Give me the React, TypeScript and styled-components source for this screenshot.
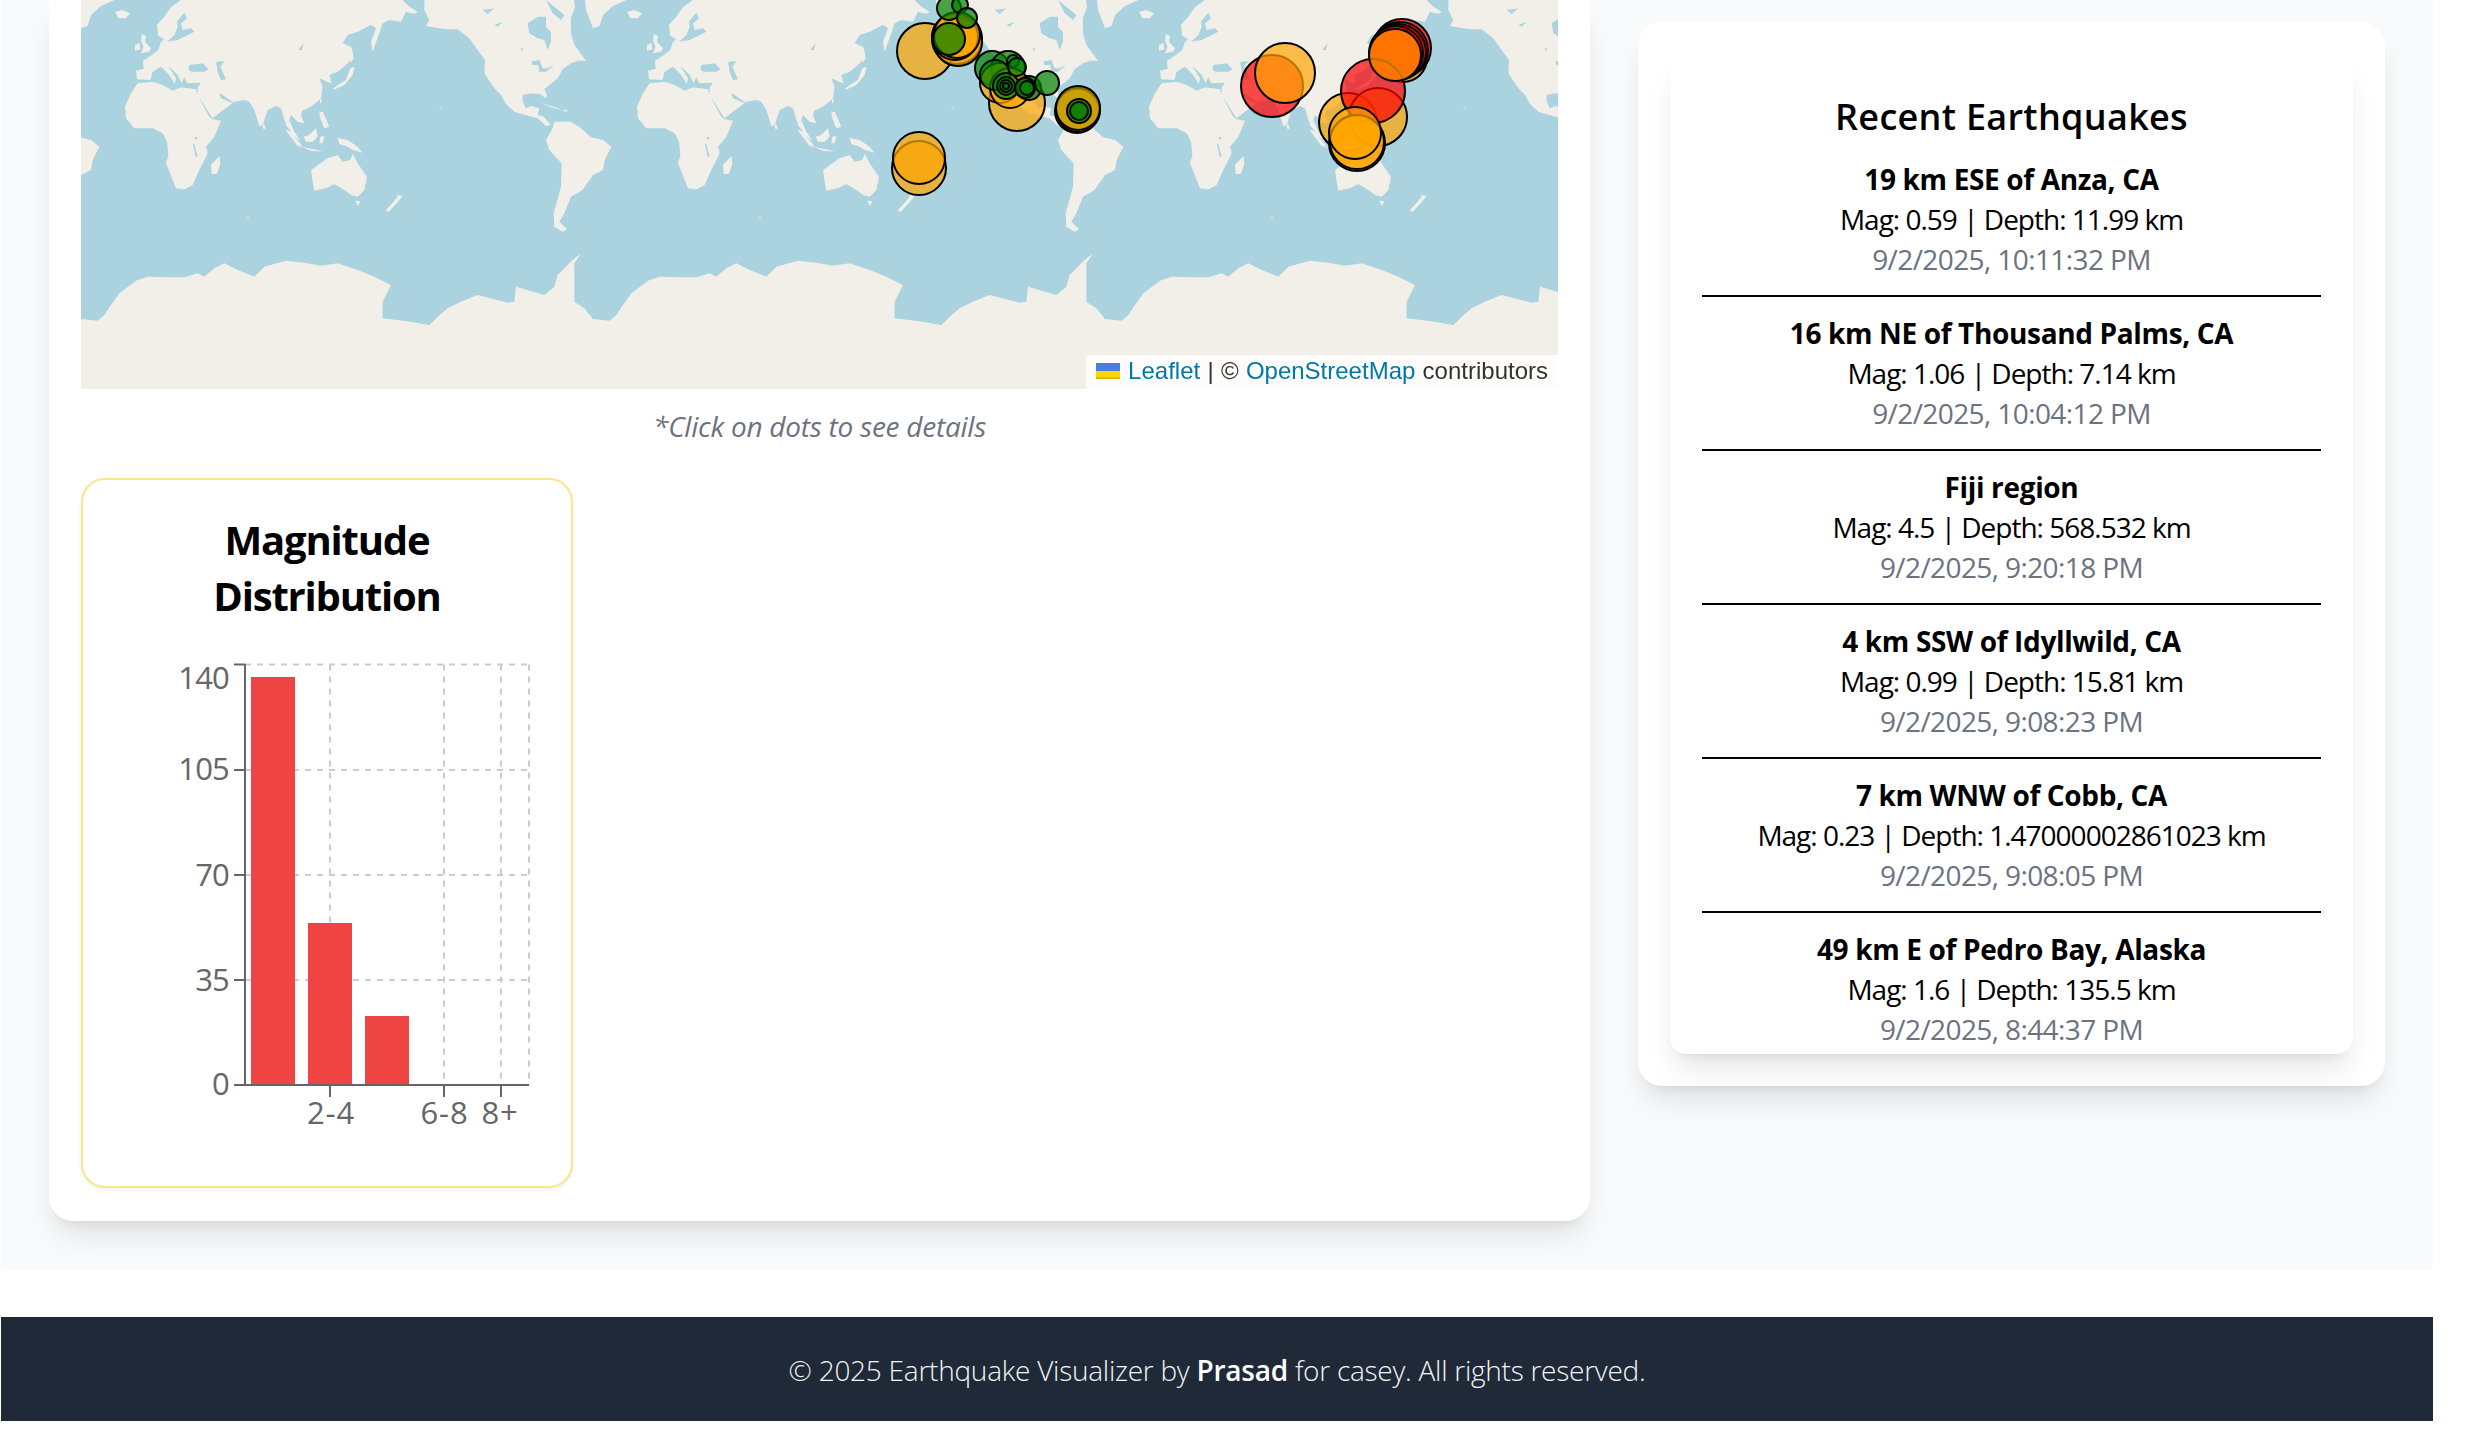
import React from "react";
import styled, { createGlobalStyle } from "styled-components";

const GlobalStyle = createGlobalStyle`
  html, body { margin: 0; padding: 0; background: #fff; }
  body { font-family: "Open Sans", "Noto Sans", sans-serif; color: #000; overflow: hidden; }
  * { box-sizing: border-box; }
`;

const Page = styled.div`
  width: 2432px;
  margin-left: 1px;
`;
const Main = styled.main`
  height: 1269px;
  background: #f9fafb;
  padding: 0 48px;
  overflow: hidden;
  display: grid;
  grid-template-columns: 1541px 747px;
  column-gap: 48px;
  align-items: start;
`;
const shadow = `box-shadow: 0 20px 30px -6px rgba(0,0,0,.1), 0 8px 12px -8px rgba(0,0,0,.1);`;
const MapCard = styled.section`
  background: #fff;
  border-radius: 0 0 24px 24px;
  padding: 0 32px 33px;
  ${shadow}
`;
const MapFrame = styled.div`
  position: relative;
  height: 389px;
  background: #aad3df;
  overflow: hidden;
`;
const MapSvg = styled.svg`
  display: block;
`;
const Attribution = styled.div`
  position: absolute;
  right: 0;
  bottom: 0;
  height: 34px;
  padding: 0 10px 2px 10px;
  display: flex;
  align-items: center;
  white-space: pre;
  background: rgba(255,255,255,.8);
  font: 24px/32px "Liberation Sans", Arial, sans-serif;
  word-spacing: 0.6px;
  color: #333;
`;
const AttrLink = styled.span`
  color: #0078a8;
`;
const FlagIcon = styled.svg`
  width: 24px;
  height: 16px;
  margin-right: 8px;
`;
const Caption = styled.p`
  margin: 17px 0 32px;
  font-size: 28px;
  line-height: 40px;
  font-style: italic;
  letter-spacing: -0.25px;
  text-align: center;
  color: #6b7280;
`;
const ChartCard = styled.div`
  width: 492px;
  height: 710px;
  border: 2px solid #fde68a;
  border-radius: 24px;
  padding: 32px;
  background: #fff;
  box-shadow: 0 2px 4px rgba(0,0,0,.06);
`;
const ChartTitle = styled.h2`
  margin: 0 0 16px;
  font-size: 40px;
  line-height: 56px;
  font-weight: 700;
  letter-spacing: -1.2px;
  text-align: center;
`;
const ChartSvg = styled.svg`
  display: block;
  width: 424px;
  height: 514px;
`;
const Side = styled.aside`
  margin-top: 22px;
  padding: 32px;
  height: 1064px;
  background: #fff;
  border-radius: 24px;
  ${shadow}
`;
const ListCard = styled.div`
  height: 1000px;
  padding: 32px;
  overflow: hidden;
  background: #fff;
  border-radius: 16px;
  ${shadow}
`;
const ListTitle = styled.h2`
  margin: 3px 0 14px;
  font-size: 36px;
  line-height: 56px;
  font-weight: 600;
  letter-spacing: 0.3px;
  text-align: center;
`;
const Item = styled.div`
  padding-bottom: 16px;
  margin-bottom: 16px;
  border-bottom: 2px solid #000;
  text-align: center;
  font-size: 28px;
  line-height: 40px;
  letter-spacing: -1px;
`;
const ItemName = styled.div`
  font-weight: 700;
  letter-spacing: -0.35px;
`;
const ItemWhen = styled.div`
  color: #6b7280;
  letter-spacing: -0.6px;
`;
const Footer = styled.footer`
  margin-top: 48px;
  height: 104px;
  padding-top: 2px;
  background: #1f2937;
  color: #f3f4f6;
  font-size: 28px;
  font-weight: 300;
  letter-spacing: -0.25px;
  display: flex;
  align-items: center;
  justify-content: center;
  white-space: pre;
`;
const FooterName = styled.strong`
  font-weight: 600;
  color: #fff;
`;

// Coast outlines traced at 3x over one 512px wide world copy (1536 units).
const land: number[][] = [
  // Eurasia
  [168,238,165,212,188,206,186,182,205,170,232,150,240,125,250,118,232,108,228,75,250,50,270,22,300,0,300,-20,965,-20,965,0,985,20,1010,35,1000,42,975,35,960,65,925,60,905,70,895,100,875,155,870,125,885,85,870,75,830,95,800,105,785,130,810,140,815,175,795,195,770,215,745,225,752,250,738,245,715,235,725,260,720,295,690,320,665,330,660,345,670,370,650,365,630,345,625,360,640,395,660,425,640,408,615,375,600,325,585,318,560,330,545,375,535,378,520,330,505,305,490,300,460,305,440,320,395,355,385,340,350,285,350,262,360,248,318,250,310,232,302,250,290,225,262,197,285,235,282,252,262,222,240,200,215,215,208,240],
  // Africa
  [170,250,150,280,132,320,135,355,160,385,215,385,245,400,258,425,262,465,255,490,285,565,310,568,335,555,355,510,380,460,375,440,400,410,420,362,395,358,385,350,350,285,345,268,300,262,275,272,245,255,215,245],
  // North America
  [1030,-20,1030,30,1045,60,1035,78,1075,85,1100,88,1130,88,1165,115,1190,150,1212,180,1210,220,1240,265,1260,285,1275,312,1300,335,1340,347,1370,355,1395,378,1410,375,1388,350,1370,345,1375,325,1350,318,1335,325,1325,305,1325,285,1350,280,1378,282,1395,295,1398,285,1390,268,1430,235,1445,208,1470,190,1490,182,1515,182,1495,155,1480,135,1470,100,1470,55,1482,20,1475,-20],
  // Greenland and Iceland
  [1510,-20,1515,30,1536,85,1556,78,1566,45,1596,18,1636,0,1636,-20],
  [103,35,125,30,147,40,135,55,112,55],
  // British Isles
  [183,102,195,108,192,125,210,145,205,155,180,160,187,140,180,120],
  [162,135,175,128,178,148,162,152],
  // South America
  [1415,385,1420,365,1470,365,1500,385,1530,412,1566,420,1591,440,1571,480,1566,510,1536,525,1505,570,1470,590,1450,640,1435,665,1458,688,1445,695,1420,680,1418,640,1440,560,1442,490,1405,450,1395,420],
  // Oceania and Indian Ocean
  [415,468,418,490,408,522,392,522,390,495],
  [690,510,740,475,770,465,785,485,808,480,815,462,830,490,858,530,850,570,830,590,810,585,790,570,760,552,735,565,700,572,695,545],
  [822,603,838,603,832,618],
  [945,572,950,585,965,588,950,607,922,637,915,630,935,608,950,590],
  // Asian islands
  [612,388,630,395,665,440,650,438],
  [660,440,700,448,725,455,690,452],
  [668,410,685,405,705,385,710,410,695,425,675,425],
  [718,410,730,408,725,430,715,430],
  [770,415,800,420,830,440,845,458,815,450,800,440,775,432],
  [715,335,725,335,745,380,730,385,718,355],
  [755,268,770,255,795,240,808,205,820,200,815,225,790,255,762,268],
  [812,140,818,175,808,190,810,165],
  [716,298,724,298,718,312],
  [545,372,553,378,552,388,546,386],
  [668,322,678,322,672,332],
  // Caribbean
  [1380,310,1420,320,1448,332,1410,322],
  [1450,328,1462,332,1450,336],
  // Pacific specks
  [1075,322,1080,322,1078,328],
  [498,650,505,652,500,656],
];
const inland: number[][] = [
  [296,55,310,38,318,55,300,70,305,90,330,85,340,95,290,120,258,125,280,105,290,80,288,65],
  [325,195,365,190,382,208,370,215,330,215,322,207],
  [405,185,430,183,418,200,435,238,420,240,410,215],
  [415,280,425,285,460,310,445,305,420,295],
  [1340,70,1370,50,1395,50,1395,80,1410,95,1410,125,1400,150,1390,120,1370,115,1345,100],
  [1350,185,1375,180,1385,205,1400,205,1420,195,1395,215,1375,215,1372,195,1355,195],
  [1240,75,1265,65,1250,80],
  [1205,30,1240,25,1220,42],
  [1320,140,1328,150,1322,152],
  [1395,0,1420,20,1450,45,1440,60,1415,40],
  [652,150,668,128,662,150],
  [340,410,350,412,345,422],
  [335,430,340,432,350,470,344,470],
];
const polar: number[] = [0,957,50,962,70,945,90,915,115,880,165,842,200,830,260,832,310,832,350,820,370,830,400,805,430,790,470,810,520,830,550,800,615,782,680,790,720,797,770,790,830,810,880,830,930,855,905,905,905,955,990,965,1045,975,1070,950,1100,925,1140,905,1190,885,1280,908,1300,905,1305,860,1390,885,1420,860,1430,825,1475,780,1500,760,1480,790,1480,905,1510,925,1536,957,1536,1300,0,1300];

const toPath = (a: number[]) => {
  let d = "";
  for (let i = 0; i < a.length; i += 2) d += `${i ? "L" : "M"}${a[i]} ${a[i + 1]}`;
  return d + "Z";
};
const landPath = land.map(toPath).join("") + toPath(polar);
const inlandPath = inland.map(toPath).join("");

type Kind = "o" | "g" | "r" | "y";
type Q = [number, number, number, Kind];
const fills: Record<Kind, string> = { o: "#ffa500", g: "#008000", r: "#ff0000", y: "#b89a00" };
const quakes: Q[] = [
  [925,51,28,"o"],[957,39,25,"o"],[958,42,24,"o"],[955,37,23,"o"],[957,35,23,"o"],
  [949,8,12,"g"],[960,5,8,"g"],[949,39,16,"g"],[967,18,10,"g"],
  [1017,103,28,"o"],[992,68,17,"g"],[1008,68,17,"g"],[1000,83,20,"o"],[1010,88,20,"o"],[995,75,15,"g"],
  [1006,86,13,"g"],[1006,86,9,"g"],[1006,86,6,"g"],[1006,86,3,"g"],[1029,88,12,"g"],[1025,88,10,"g"],[1027,88,7,"g"],
  [1047,83,12,"g"],[1013,61,6,"g"],[1017,67,9,"g"],
  [1077,111,22,"o"],[1078,110,22,"o"],[1078,108,22,"y"],[1079,111,12,"g"],[1079,111,9,"g"],
  [919,168,27,"o"],[919,158,26,"o"],
  [1272,86,31,"r"],[1285,73,30,"o"],
  [1403,58,24,"o"],[1402,48,29,"r"],[1400,50,28,"r"],[1398,52,28,"r"],[1396,53,27,"r"],
  [1348,122,29,"o"],[1378,117,29,"o"],[1373,91,32,"r"],[1395,55,26,"o"],
  [1357,143,28,"o"],[1357,142,27,"o"],[1355,133,26,"o"],
];

const items = [
  ["19 km ESE of Anza, CA", "Mag: 0.59 | Depth: 11.99 km", "9/2/2025, 10:11:32 PM"],
  ["16 km NE of Thousand Palms, CA", "Mag: 1.06 | Depth: 7.14 km", "9/2/2025, 10:04:12 PM"],
  ["Fiji region", "Mag: 4.5 | Depth: 568.532 km", "9/2/2025, 9:20:18 PM"],
  ["4 km SSW of Idyllwild, CA", "Mag: 0.99 | Depth: 15.81 km", "9/2/2025, 9:08:23 PM"],
  ["7 km WNW of Cobb, CA", "Mag: 0.23 | Depth: 1.47000002861023 km", "9/2/2025, 9:08:05 PM"],
  ["49 km E of Pedro Bay, Alaska", "Mag: 1.6 | Depth: 135.5 km", "9/2/2025, 8:44:37 PM"],
];

const WorldMap = () => (
  <MapSvg width={1477} height={389} viewBox="0 0 1477 389">
    <defs>
      <filter id="soft" x="0" y="0" width="100%" height="100%">
        <feGaussianBlur stdDeviation="0.6" />
      </filter>
      <g id="world">
        <path d={landPath} fill="#f2efe9" />
        <path d={inlandPath} fill="#aad3df" />
      </g>
    </defs>
    <g filter="url(#soft)">
      <rect width={1477} height={389} fill="#aad3df" />
      {[-512, 0, 512, 1024].map((tx) => (
        <use key={tx} href="#world" transform={`translate(${tx} 0) scale(0.33333)`} />
      ))}
    </g>
    {quakes.map(([x, y, r, c], i) => (
      <circle key={i} cx={x - 81} cy={y} r={r} fill={fills[c]} fillOpacity={0.7} stroke="#000" strokeWidth={2} />
    ))}
  </MapSvg>
);

const bars = [
  [251, 677, 44],
  [308, 923, 44],
  [365, 1016, 44],
];
const hLines = [664.5, 770, 875, 980];
const vLines = [330, 444, 501, 529];
const yLabels: [string, number][] = [["140", 689], ["105", 780], ["70", 886], ["35", 991], ["0", 1095]];
const xLabels: [string, number][] = [["2-4", 331], ["6-8", 444.5], ["8+", 500]];

const Chart = () => (
  <ChartSvg viewBox="115 640 424 514">
    <g stroke="#ccc" strokeWidth={2} strokeDasharray="6 6">
      {hLines.map((y) => <line key={y} x1={245} x2={529} y1={y} y2={y} />)}
      {vLines.map((x) => <line key={x} x1={x} x2={x} y1={664.5} y2={1085} />)}
    </g>
    {bars.map(([x, y, w]) => <rect key={x} x={x} y={y} width={w} height={1085 - y} fill="#ef4444" />)}
    <g stroke="#666" strokeWidth={2}>
      <line x1={245} x2={245} y1={664} y2={1086} />
      <line x1={234} x2={529} y1={1085} y2={1085} />
      {[664.5, 770, 875, 980].map((y) => <line key={y} x1={234} x2={245} y1={y} y2={y} />)}
      {[330, 444, 501].map((x) => <line key={x} x1={x} x2={x} y1={1085} y2={1097} />)}
    </g>
    <g fill="#666" fontSize={31} fontFamily='"Open Sans", sans-serif'>
      {yLabels.map(([t, y]) => <text key={t} x={229} y={y} textAnchor="end" letterSpacing={-0.8}>{t}</text>)}
      {xLabels.map(([t, x]) => <text key={t} x={x} y={1124} textAnchor="middle" letterSpacing={0.8}>{t}</text>)}
    </g>
  </ChartSvg>
);

export default function App() {
  return (
    <Page>
      <GlobalStyle />
      <Main>
        <MapCard>
          <MapFrame>
            <WorldMap />
            <Attribution>
              <FlagIcon viewBox="0 0 12 8">
                <path fill="#4C7BE1" d="M0 0h12v4H0z" />
                <path fill="#FFD500" d="M0 4h12v3H0z" />
                <path fill="#E0BC00" d="M0 7h12v1H0z" />
              </FlagIcon>
              <AttrLink>Leaflet</AttrLink>
              {" | © "}
              <AttrLink>OpenStreetMap</AttrLink>
              {" contributors"}
            </Attribution>
          </MapFrame>
          <Caption>*Click on dots to see details</Caption>
          <ChartCard>
            <ChartTitle>Magnitude Distribution</ChartTitle>
            <Chart />
          </ChartCard>
        </MapCard>
        <Side>
          <ListCard>
            <ListTitle>Recent Earthquakes</ListTitle>
            {items.map(([a, b, c]) => (
              <Item key={a}>
                <ItemName>{a}</ItemName>
                <div>{b}</div>
                <ItemWhen>{c}</ItemWhen>
              </Item>
            ))}
          </ListCard>
        </Side>
      </Main>
      <Footer>
        {"© 2025 Earthquake Visualizer by "}
        <FooterName>Prasad</FooterName>
        {" for casey. All rights reserved."}
      </Footer>
    </Page>
  );
}
